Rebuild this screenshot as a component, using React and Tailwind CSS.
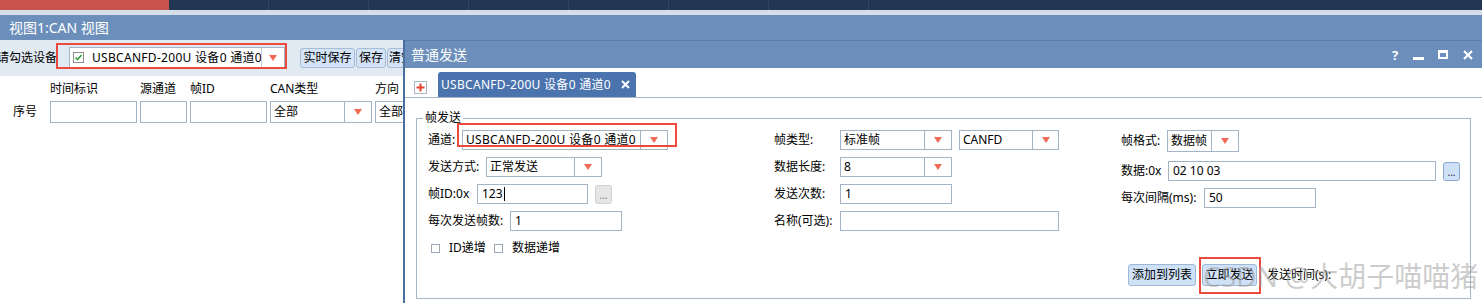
import React from "react";

const FONT = "font-['Noto_Sans','Noto_Sans_CJK_SC',sans-serif]";

function Arrow() {
  return (
    <svg width="8" height="6" viewBox="0 0 8 6">
      <path d="M0 0H8L4 6Z" fill="#f26a56" />
    </svg>
  );
}

function Select({ className = "", text, arrow = "w-[27px]", textClass = "" }) {
  return (
    <div className={"flex h-[20px] border border-[#a4b4c7] bg-white shrink-0 " + className}>
      <div className={"flex-1 flex items-center pl-[3px] overflow-hidden whitespace-nowrap " + textClass}>{text}</div>
      <div className={"border-l border-[#a4b4c7] flex items-center justify-center shrink-0 " + arrow}>
        <Arrow />
      </div>
    </div>
  );
}

function Input({ className = "", text = "", cursor = false }) {
  return (
    <div className={"h-[20px] border border-[#a4b4c7] bg-white flex items-center pl-[4px] shrink-0 whitespace-nowrap " + className}>
      {text}
      {cursor && <span className="w-px h-[14px] bg-black ml-[1px]" />}
    </div>
  );
}

function Row({ children, className = "" }) {
  return <div className={"flex items-center h-[20px] " + className}>{children}</div>;
}

function Label({ className = "", children }) {
  return <span className={"shrink-0 whitespace-nowrap " + className}>{children}</span>;
}

function CheckBox({ className = "" }) {
  return <div className={"w-[9px] h-[9px] border border-[#9aa6b4] bg-white shrink-0 " + className} />;
}

export default function App() {
  return (
    <div className={"relative w-[1482px] h-[303px] overflow-hidden bg-white text-[12px] leading-[16px] text-black " + FONT}>
      {/* top strip */}
      <div className="h-[10px] bg-[#243752] flex">
        <div className="w-[169px] bg-[#c9534f]" />
        <div className="w-[100px] border-r border-[#33465f]" />
        <div className="w-[100px] border-r border-[#33465f]" />
        <div className="w-[100px] border-r border-[#33465f]" />
        <div className="w-[100px] border-r border-[#33465f]" />
        <div className="w-[100px] border-r border-[#33465f]" />
        <div className="w-[100px] border-r border-[#33465f]" />
        <div className="w-[100px] border-r border-[#33465f]" />
      </div>
      <div className="h-[5px] bg-[#d5dde7]" />
      {/* main title bar */}
      <div className="h-[25px] bg-[#6b8fba] flex items-center pl-[9px] text-white text-[14px] leading-[18px]">
        视图1:CAN 视图
      </div>

      <div className="flex h-[263px]">
        {/* left panel */}
        <div className="w-[403px] shrink-0 flex flex-col overflow-hidden">
          <div className="h-[36px] bg-[#e1e9f2] flex items-start pt-[7px] whitespace-nowrap">
            <span className="ml-[-3px] w-[72px] shrink-0 h-[21px] flex items-center">请勾选设备</span>
            <div className="w-[216px] h-[21px] shrink-0 flex border border-[#a4b4c7] bg-white">
              <div className="flex-1 flex items-center pl-[3px] overflow-hidden">
                <svg width="11" height="11" viewBox="0 0 11 11" className="shrink-0">
                  <rect x="0.5" y="0.5" width="10" height="10" fill="#fff" stroke="#8c8c8c" />
                  <path d="M2.5 5.5L4.5 7.5L8.5 3" fill="none" stroke="#2f9e3a" strokeWidth="1.6" />
                </svg>
                <span className="ml-[8px] tracking-[0.3px]">USBCANFD-200U 设备0 通道0</span>
              </div>
              <div className="w-[23px] shrink-0 border-l border-[#c5cfdb] flex items-center justify-center">
                <Arrow />
              </div>
            </div>
            <div className="ml-[15px] mt-[1px] flex gap-[1px]">
              <div className="w-[55px] h-[20px] shrink-0 bg-[#d4e3f5] border border-[#a7bcd6] rounded-[3px] flex items-center justify-center">实时保存</div>
              <div className="w-[30px] h-[20px] shrink-0 bg-[#d4e3f5] border border-[#a7bcd6] rounded-[3px] flex items-center justify-center">保存</div>
              <div className="w-[40px] h-[20px] shrink-0 bg-[#d4e3f5] border border-[#a7bcd6] rounded-[3px] flex items-center pl-[1px]">清空</div>
            </div>
          </div>
          <div className="flex-1 bg-white flex whitespace-nowrap">
            <div className="w-[50px] shrink-0 flex flex-col">
              <div className="h-[25px]" />
              <div className="h-[22px] flex items-center pl-[13px]">序号</div>
            </div>
            <div className="flex gap-[3px]">
              <div className="w-[87px] shrink-0 flex flex-col">
                <div className="h-[25px] flex items-center">时间标识</div>
                <div className="h-[22px] border border-[#a4b4c7]" />
              </div>
              <div className="w-[47px] shrink-0 flex flex-col">
                <div className="h-[25px] flex items-center">源通道</div>
                <div className="h-[22px] border border-[#a4b4c7]" />
              </div>
              <div className="w-[77px] shrink-0 flex flex-col">
                <div className="h-[25px] flex items-center">帧ID</div>
                <div className="h-[22px] border border-[#a4b4c7]" />
              </div>
              <div className="w-[102px] shrink-0 flex flex-col">
                <div className="h-[25px] flex items-center">CAN类型</div>
                <div className="h-[22px] border border-[#a4b4c7] flex">
                  <div className="flex-1 flex items-center pl-[3px]">全部</div>
                  <div className="w-[27px] border-l border-[#a4b4c7] flex items-center justify-center"><Arrow /></div>
                </div>
              </div>
              <div className="w-[60px] shrink-0 flex flex-col">
                <div className="h-[25px] flex items-center">方向</div>
                <div className="h-[22px] border border-[#a4b4c7] flex items-center pl-[3px]">全部</div>
              </div>
            </div>
          </div>
        </div>

        {/* dialog */}
        <div className="flex-1 border-l-2 border-[#4a6e9e] flex flex-col min-w-0">
          <div className="h-[28px] bg-[#6b8fba] border-t border-[#5a7eab] flex items-center text-white">
            <span className="pl-[6px] text-[14px] leading-[18px] flex-1">普通发送</span>
            <div className="flex items-center pr-[9px]">
              <span className="w-[10px] text-[13px] font-bold leading-[16px] text-center">?</span>
              <span className="ml-[13px] w-[11px] h-[10px] flex items-end"><span className="w-[11px] h-[3px] bg-white" /></span>
              <span className="ml-[14px] w-[10px] h-[9px] border-2 border-t-[3px] border-white" />
              <svg width="10" height="10" viewBox="0 0 10 10" className="ml-[15px]">
                <path d="M1 1L9 9M9 1L1 9" stroke="#fff" strokeWidth="2.2" />
              </svg>
            </div>
          </div>
          <div className="h-[30px] border-b border-[#a8b5c4] flex items-end pl-[9px]">
            <div className="w-[13px] h-[13px] border border-[#a9b5c3] mb-[3px] flex items-center justify-center">
              <svg width="9" height="9" viewBox="0 0 9 9">
                <path d="M4.5 0.5V8.5M0.5 4.5H8.5" stroke="#e4452f" strokeWidth="2" />
              </svg>
            </div>
            <div className="ml-[11px] w-[198px] h-[25px] bg-[#4b74af] rounded-t-[3px] flex items-center pl-[3px] text-white whitespace-nowrap">
              <span className="tracking-[0.3px]">USBCANFD-200U 设备0 通道0</span>
              <svg width="9" height="9" viewBox="0 0 9 9" className="ml-[10px]">
                <path d="M1 1L8 8M8 1L1 8" stroke="#fff" strokeWidth="2" />
              </svg>
            </div>
          </div>
          <div className="flex-1 pt-[20px] px-[11px]">
            <div className="relative h-[181px] border border-[#a7b5c7] pt-[11px] pl-[11px] flex">
              <span className="absolute left-[6px] top-[-9px] bg-white px-[2px]">帧发送</span>
              {/* column A */}
              <div className="w-[346px] shrink-0 flex flex-col gap-[7px]">
                <Row>
                  <Label className="w-[34px]">通道:</Label>
                  <Select className="w-[206px]" textClass="tracking-[0.3px]" text="USBCANFD-200U 设备0 通道0" />
                </Row>
                <Row>
                  <Label className="w-[58px]">发送方式:</Label>
                  <Select className="w-[116px]" text="正常发送" />
                </Row>
                <Row>
                  <Label className="w-[49px]">帧ID:0x</Label>
                  <Input className="w-[111px]" text="123" cursor />
                  <div className="ml-[7px] w-[17px] h-[19px] rounded-[3px] bg-[#e6e6e6] border border-[#d0d0d0] flex items-end justify-center text-[10px] leading-[12px] text-[#777] pb-[2px]">...</div>
                </Row>
                <Row>
                  <Label className="w-[82px]">每次发送帧数:</Label>
                  <Input className="w-[112px]" text="1" />
                </Row>
                <Row className="h-[18px] pl-[3px] whitespace-nowrap">
                  <CheckBox />
                  <span className="ml-[9px] w-[45px]">ID递增</span>
                  <CheckBox />
                  <span className="ml-[9px]">数据递增</span>
                </Row>
              </div>
              {/* column B */}
              <div className="w-[347px] shrink-0 flex flex-col gap-[7px]">
                <Row>
                  <Label className="w-[66px]">帧类型:</Label>
                  <Select className="w-[112px]" text="标准帧" />
                  <Select className="ml-[7px] w-[100px]" arrow="w-[26px]" text="CANFD" />
                </Row>
                <Row>
                  <Label className="w-[66px]">数据长度:</Label>
                  <Select className="w-[112px]" text="8" />
                </Row>
                <Row>
                  <Label className="w-[66px]">发送次数:</Label>
                  <Input className="w-[112px]" text="1" />
                </Row>
                <Row>
                  <Label className="w-[66px]">名称(可选):</Label>
                  <Input className="w-[219px]" />
                </Row>
              </div>
              {/* column C */}
              <div className="flex-1 flex flex-col">
                <Row className="h-[22px]">
                  <Label className="w-[46px]">帧格式:</Label>
                  <Select className="w-[72px] h-[22px]" text="数据帧" />
                </Row>
                <Row className="mt-[9px]">
                  <Label className="w-[47px]">数据:0x</Label>
                  <Input className="w-[268px]" text="02 10 03" />
                  <div className="ml-[7px] w-[17px] h-[19px] rounded-[3px] bg-[#cfe1f6] border border-[#8aa8cc] flex items-end justify-center text-[10px] leading-[12px] text-[#222] pb-[2px]">...</div>
                </Row>
                <Row className="mt-[7px]">
                  <Label className="w-[83px]">每次间隔(ms):</Label>
                  <Input className="w-[112px]" text="50" />
                </Row>
                <div className="mt-[56px] ml-[7px] flex items-center h-[22px] whitespace-nowrap">
                  <div className="w-[68px] h-[22px] bg-[#cfe1f7] border border-[#9db7d6] rounded-[3px] flex items-center justify-center">添加到列表</div>
                  <div className="ml-[6px] w-[55px] h-[22px] bg-[#cfe1f7] border border-[#9db7d6] rounded-[3px] flex items-center justify-center">立即发送</div>
                  <span className="ml-[10px]">发送时间(s):</span>
                </div>
              </div>
            </div>
          </div>
        </div>
      </div>

      {/* red annotation boxes */}
      <div className="absolute left-[56px] top-[43px] w-[231px] h-[26px] border-2 border-[#ea4b3c]" />
      <div className="absolute left-[457px] top-[123px] w-[220px] h-[24px] border-2 border-[#ea4b3c]" />
      <div className="absolute left-[1199px] top-[257px] w-[62px] h-[37px] border-2 border-[#ea4b3c]" />

      {/* watermark */}
      <span className="absolute left-[1203px] top-[256px] text-[28px] leading-[40px] text-[#9a9a9a]/50 whitespace-nowrap">
        CSDN @大胡子喵喵猪
      </span>
    </div>
  );
}
